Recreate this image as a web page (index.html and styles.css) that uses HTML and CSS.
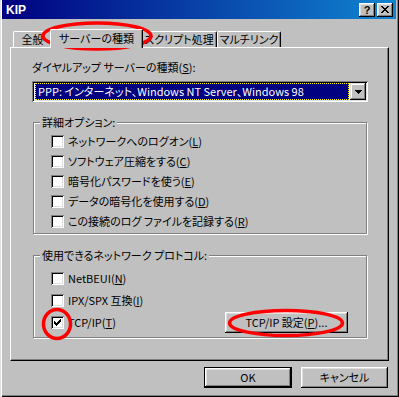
FILE: index.html
```html
<!DOCTYPE html>
<html lang="ja">
<head>
  <meta charset="UTF-8" />
  <title>KIP</title>
  <link rel="stylesheet" href="styles.css">
</head>
<body>
  <div class="window">
    <div class="titlebar">
      <span class="title">KIP</span>
      <div class="title-btns">
        <button class="tbtn">?</button>
        <button class="tbtn">
          <svg width="8" height="7" viewBox="0 0 8 7"><path d="M0 0h2v1h1v1h2v-1h1v-1h2v1h-1v1h-1v1h-1v1h1v1h1v1h1v1h-2v-1h-1v-1h-2v1h-1v1h-2v-1h1v-1h1v-1h1v-1h-1v-1h-1v-1h-1z" fill="#000"/></svg>
        </button>
      </div>
    </div>

    <div class="content">
      <div class="tabs">
        <div class="tab t1">全般</div>
        <div class="tab active">サーバーの種類</div>
        <div class="tab t3">スクリプト処理</div>
        <div class="tab t4">マルチリンク</div>
      </div>

      <div class="panel">
        <div class="field-label">ダイヤルアップ サーバーの種類(<u>S</u>):</div>
        <div class="combo">
          <div class="combo-value">PPP: インターネット、Windows NT Server、Windows 98</div>
          <div class="combo-btn">
            <svg width="7" height="4" viewBox="0 0 7 4"><path d="M0 0h7v1h-1v1h-1v1h-1v1h-1v-1h-1v-1h-1v-1h-1z" fill="#000"/></svg>
          </div>
        </div>

        <div class="group options">
          <div class="group-title">詳細オプション:</div>
          <div class="check"><span class="box"></span>ネットワークへのログオン(<u>L</u>)</div>
          <div class="check"><span class="box"></span>ソフトウェア圧縮をする(<u>C</u>)</div>
          <div class="check"><span class="box"></span>暗号化パスワードを使う(<u>E</u>)</div>
          <div class="check"><span class="box"></span>データの暗号化を使用する(<u>D</u>)</div>
          <div class="check"><span class="box"></span>この接続のログ ファイルを記録する(<u>R</u>)</div>
        </div>

        <div class="group protocols">
          <div class="group-title">使用できるネットワーク プロトコル:</div>
          <div class="check"><span class="box"></span>NetBEUI(<u>N</u>)</div>
          <div class="check"><span class="box"></span>IPX/SPX 互換(<u>I</u>)</div>
          <div class="check">
            <span class="box">
              <svg width="7" height="7" viewBox="0 0 7 7"><path d="M0 2h1v1h1v1h1v-1h1v-1h1v-1h1v-1h1v3h-1v1h-1v1h-1v1h-1v1h-1v-1h-1v-1h-1z" fill="#000"/></svg>
            </span>TCP/IP(<u>T</u>)
            <button class="btn tcp">TCP/IP 設定(<u>P</u>)...</button>
          </div>
        </div>
      </div>

      <div class="actions">
        <button class="btn default ok">OK</button>
        <button class="btn cancel">キャンセル</button>
      </div>
    </div>

    <!-- red marks drawn over the dialog -->
    <svg class="marks" width="399" height="397">
      <ellipse cx="97" cy="36" rx="54" ry="13" />
      <ellipse cx="57" cy="324" rx="13.5" ry="14.5" />
      <ellipse cx="286" cy="323" rx="56.5" ry="12.5" />
    </svg>
  </div>
</body>
</html>
```

FILE: styles.css
```css
body {
  margin: 0;
  background: #c0c0c0;
  font-family: "Noto Sans CJK JP", "Liberation Sans", sans-serif;
  font-size: 11px;
  font-feature-settings: "palt";
  color: #000;
}

button {
  font: inherit;
  color: inherit;
  padding: 0;
}

.window {
  position: relative;
  width: 399px;
  height: 397px;
  box-sizing: border-box;
  padding: 0 3px 3px 2px;
  background: #c0c0c0;
  box-shadow: inset 1px 0 #dfdfdf, inset 2px 0 #fff, inset -1px -1px #000, inset -2px -2px #808080;
}

.titlebar {
  height: 19px;
  display: flex;
  align-items: center;
  padding: 0 3px 0 4px;
  background: linear-gradient(to right, #000080, #1084d0);
}

.title {
  color: #fff;
  font-family: "Liberation Sans", sans-serif;
  font-weight: bold;
  font-size: 12px;
}

.title-btns {
  margin-left: auto;
  display: flex;
  gap: 2px;
}

.tbtn {
  width: 16px;
  height: 14px;
  border: none;
  background: #c0c0c0;
  box-shadow: inset -1px -1px #000, inset 1px 1px #fff, inset -2px -2px #808080, inset 2px 2px #dfdfdf;
  display: flex;
  align-items: center;
  justify-content: center;
  font-family: "Liberation Sans", sans-serif;
  font-weight: bold;
  font-size: 11px;
  line-height: 12px;
}

.content {
  padding: 10px 7px 0 8px;
}

/* tabs */
.tabs {
  display: flex;
  align-items: flex-end;
  height: 18px;
  padding-left: 3px;
}

.tab {
  height: 16px;
  box-sizing: border-box;
  border: 1px solid #fff;
  border-right-color: #000;
  border-bottom: none;
  border-radius: 2px 2px 0 0;
  box-shadow: inset -1px 0 #808080;
  text-align: center;
  line-height: 15px;
  white-space: nowrap;
}

.t1 { width: 39px; }
.t3 { width: 76px; }
.t4 { width: 64px; }

.tab.active {
  position: relative;
  z-index: 1;
  width: 93px;
  height: 19px;
  margin: 0 -2px -1px;
  background: #c0c0c0;
  line-height: 16px;
}

/* property sheet */
.panel {
  height: 314px;
  box-sizing: border-box;
  border: 1px solid #fff;
  border-right-color: #000;
  border-bottom-color: #000;
  box-shadow: inset -1px -1px #808080;
  padding: 0 20px 0 21px;
}

.field-label {
  margin-top: 12px;
  line-height: 14px;
}

u {
  text-underline-offset: 1px;
}

.combo {
  margin-top: 7px;
  height: 21px;
  box-sizing: border-box;
  display: flex;
  padding: 2px 2px 2px 3px;
  background: #fff;
  box-shadow: inset 1px 1px #808080, inset -1px -1px #fff, inset 2px 2px #000, inset -2px -2px #dfdfdf;
}

.combo-value {
  flex: 1;
  background: #000080;
  color: #fff;
  outline: 1px dotted #ffff00;
  outline-offset: -1px;
  line-height: 16px;
  padding-left: 3px;
  white-space: nowrap;
  overflow: hidden;
  margin-right: 1px;
}

.combo-btn {
  width: 16px;
  height: 17px;
  display: flex;
  align-items: center;
  justify-content: center;
  background: #c0c0c0;
  box-shadow: inset -1px -1px #000, inset 1px 1px #dfdfdf, inset -2px -2px #808080, inset 2px 2px #fff;
}

/* group boxes */
.group {
  margin: 20px 1px 0;
  border: 1px solid #808080;
  box-shadow: inset 1px 1px #fff, 1px 1px #fff;
  padding: 0 0 2px 17px;
}

.group-title {
  width: fit-content;
  margin: -8px 0 2px -11px;
  padding: 0 2px;
  background: #c0c0c0;
  line-height: 14px;
}

.protocols {
  margin-top: 21px;
  padding-bottom: 4px;
}

.protocols .group-title {
  margin-bottom: 5px;
}

.check {
  height: 20px;
  display: flex;
  align-items: center;
  white-space: nowrap;
}

.protocols .check {
  height: 22px;
}

.box {
  width: 13px;
  height: 13px;
  flex: none;
  margin-right: 4px;
  background: #fff;
  box-shadow: inset 1px 1px #808080, inset -1px -1px #fff, inset 2px 2px #000, inset -2px -2px #dfdfdf;
  display: flex;
  align-items: center;
  justify-content: center;
}

/* buttons */
.btn {
  height: 21px;
  border: none;
  background: #c0c0c0;
  box-shadow: inset -1px -1px #000, inset 1px 1px #fff, inset -2px -2px #808080, inset 2px 2px #dfdfdf;
  line-height: 19px;
  white-space: nowrap;
}

.tcp {
  width: 123px;
  margin-left: auto;
  margin-right: 18px;
}

.actions {
  display: flex;
  justify-content: flex-end;
  gap: 9px;
  margin-top: 6px;
  padding-right: 1px;
}

.ok { width: 88px; }
.cancel { width: 87px; }

.btn.default {
  box-shadow: inset 0 0 0 1px #000, inset -2px -2px #000, inset 2px 2px #fff, inset -3px -3px #808080, inset 3px 3px #dfdfdf;
}

.marks {
  position: absolute;
  top: 0;
  left: 0;
  pointer-events: none;
}

.marks ellipse {
  fill: none;
  stroke: #f00;
  stroke-width: 3.5;
}
```
